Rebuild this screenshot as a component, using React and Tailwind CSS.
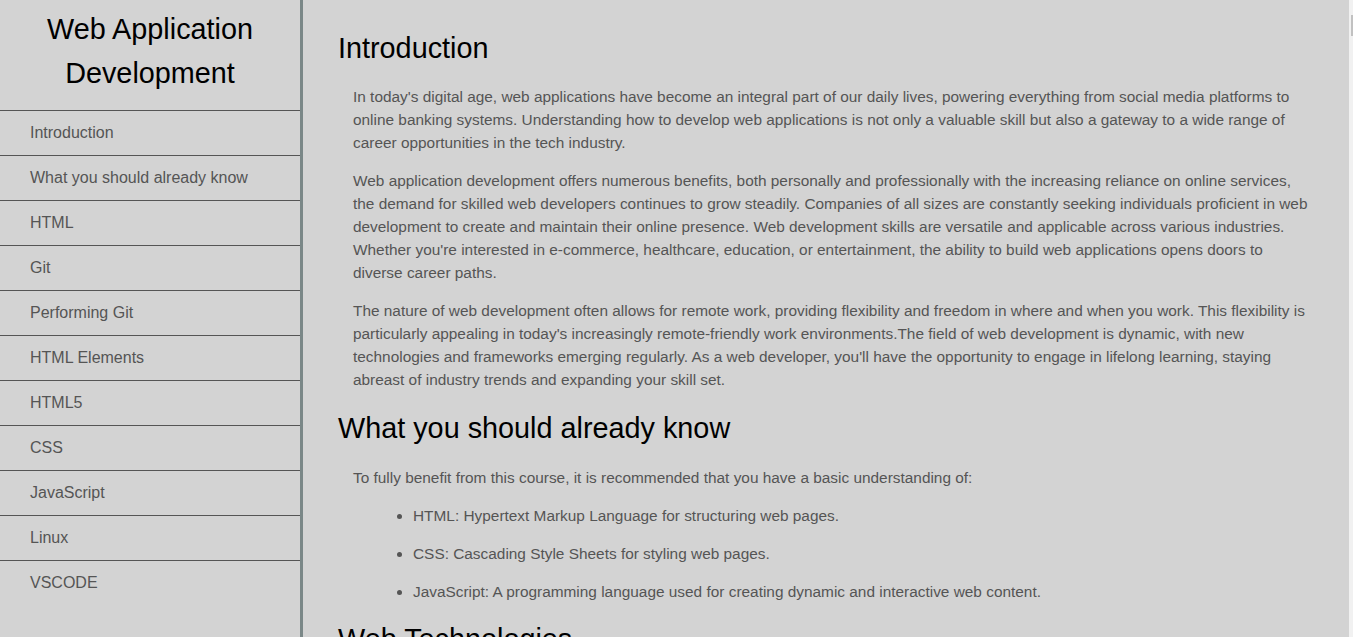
export default function App() {
  const nav = [
    "Introduction",
    "What you should already know",
    "HTML",
    "Git",
    "Performing Git",
    "HTML Elements",
    "HTML5",
    "CSS",
    "JavaScript",
    "Linux",
    "VSCODE",
  ];
  const font = { fontFamily: '"Liberation Sans", Arial, sans-serif' };
  const p = "ml-[15px] mr-[15px] my-[16px] text-[15.4px] leading-[22.8px]";
  const h = "mt-[20px] mb-[22px] text-[28.8px] leading-[32px] font-normal text-black";
  return (
    <div className="flex h-[637px] w-[1353px] overflow-hidden bg-[#d3d3d3]" style={font}>
      <aside className="w-[303px] shrink-0 border-r-[3px] border-[#7a8787] bg-[#d3d3d3]">
        <h1 className="px-2 pt-[7px] pb-[15px] text-center text-[28.8px] leading-[44px] font-normal text-black">
          Web Application
          <br />
          Development
        </h1>
        <nav>
          {nav.map((n) => (
            <div
              key={n}
              className="flex h-[45px] items-center border-t border-[#555] pl-[30px] text-[16px] text-[#555]"
            >
              {n}
            </div>
          ))}
        </nav>
      </aside>
      <main className="min-w-0 flex-1 pl-[35px] pr-[21px] pt-[12px] text-[#555]">
        <h2 className={h}>Introduction</h2>
        <p className={p}>
          In today's digital age, web applications have become an integral part of our daily lives, powering everything from social media platforms to online banking systems. Understanding how to develop web applications is not only a valuable skill but also a gateway to a wide range of career opportunities in the tech industry.
        </p>
        <p className={p}>
          Web application development offers numerous benefits, both personally and professionally with the increasing reliance on online services,
          <br />
          the demand for skilled web developers continues to grow steadily. Companies of all sizes are constantly seeking individuals proficient in web development to create and maintain their online presence. Web development skills are versatile and applicable across various industries. Whether you're interested in e-commerce, healthcare, education, or entertainment, the ability to build web applications opens doors to diverse career paths.
        </p>
        <p className={p}>
          The nature of web development often allows for remote work, providing flexibility and freedom in where and when you work. This flexibility is particularly appealing in today's increasingly remote-friendly work environments.The field of web development is dynamic, with new technologies and frameworks emerging regularly. As a web developer, you'll have the opportunity to engage in lifelong learning, staying abreast of industry trends and expanding your skill set.
        </p>
        <h2 className="mt-[20px] mb-[23px] text-[28.8px] leading-[32px] font-normal text-black">What you should already know</h2>
        <p className={p}>
          To fully benefit from this course, it is recommended that you have a basic understanding of:
        </p>
        <ul className="mt-[16px] mb-[16px] list-disc pl-[75px] text-[15.4px] leading-[22.8px]">
          <li className="mb-[14.8px]">HTML: Hypertext Markup Language for structuring web pages.</li>
          <li className="mb-[14.8px]">CSS: Cascading Style Sheets for styling web pages.</li>
          <li className="mb-[14.8px]">JavaScript: A programming language used for creating dynamic and interactive web content.</li>
        </ul>
        <h2 className={h}>Web Technologies</h2>
        <p className={p}>
          Web technologies are the tools and techniques used to create and deliver content on the web.
        </p>
      </main>
      <div className="relative w-[4px] shrink-0 bg-[#f1f1f1]">
        <div className="absolute right-0 top-[15px] h-[21px] w-[2px] bg-[#c1c1c1]" />
      </div>
    </div>
  );
}
